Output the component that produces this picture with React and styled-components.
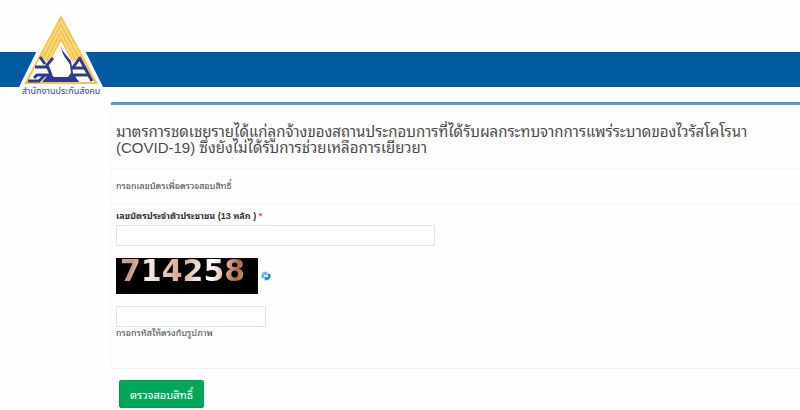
import React, { useState } from "react";
import styled, { createGlobalStyle } from "styled-components";

const GlobalStyle = createGlobalStyle`
  * {
    box-sizing: border-box;
  }
  body {
    margin: 0;
    background: #fefefe;
    color: #4a4a4a;
    font-family: "Liberation Sans", "Noto Sans Thai Looped", sans-serif;
    font-size: 9px;
    line-height: 12px;
  }
`;

const Header = styled.header`
  position: relative;
  padding-top: 52px;
`;

const Bar = styled.div`
  height: 35px;
  background: #005a9f;
`;

const Brand = styled.a`
  position: absolute;
  top: 0;
  left: 18px;
  display: flex;
  flex-direction: column;
  align-items: center;
  width: 86px;
  color: #34408f;
  font-family: "Noto Sans Thai", sans-serif;
  line-height: 8px;
  text-decoration: none;
  white-space: nowrap;
`;

const Content = styled.main`
  padding: 15px 0 2px 110px;
`;

const Panel = styled.section`
  border-top: 3px solid #5b9bc6;
  border-left: 1px solid #f9f9f9;
  border-bottom: 1px solid #f3f3f3;
  border-radius: 3px 0 0 3px;
`;

const PanelHeader = styled.div`
  padding: 19px 5px 12px;
  border-bottom: 1px solid #f7f7f7;
`;

const Title = styled.h1`
  margin: 0;
  font-size: 15px;
  font-weight: 400;
  line-height: 16px;
`;

const Intro = styled.p`
  margin: 0;
  padding: 11px 5px;
  border-bottom: 1px solid #f7f7f7;
`;

const Fields = styled.div`
  display: flex;
  flex-direction: column;
  align-items: flex-start;
  gap: 12px;
  padding: 6px 5px 29px;
`;

const Field = styled.div`
  width: 100%;
`;

const Label = styled.label`
  display: block;
  margin-bottom: 3px;
  color: #333333;
  font-weight: 700;
`;

const Required = styled.span`
  color: #e8453c;
`;

const TextInput = styled.input`
  display: block;
  width: 100%;
  max-width: ${(props) => (props.$short ? "150px" : "319px")};
  height: 21px;
  padding: 2px 6px;
  border: 1px solid #dfe6e8;
  background: #ffffff;
  color: #444444;
  font: inherit;
`;

const Hint = styled.label`
  display: block;
`;

const CaptchaRow = styled.div`
  display: flex;
  align-items: center;
  gap: 3px;
`;

const Captcha = styled.div`
  width: 142px;
  height: 36px;
  padding-left: 4px;
  background: #000000;
  font-family: "DejaVu Sans", sans-serif;
  font-size: 30px;
  font-weight: 700;
  line-height: 26px;
`;

const CaptchaCode = styled.span`
  background: linear-gradient(
    100deg,
    #d9a58c 0%,
    #c99880 10%,
    #f3e9e4 24%,
    #e2c6b8 38%,
    #d8a287 50%,
    #eadcd5 60%,
    #ffffff 72%,
    #e0b9a5 82%,
    #a8684c 92%,
    #d7a78f 100%
  );
  background-clip: text;
  color: transparent;
`;

const RefreshButton = styled.button`
  display: flex;
  padding: 0;
  border: 0;
  background: none;
  cursor: pointer;
`;

const Actions = styled.div`
  padding: 11px 9px 0;
`;

const SubmitButton = styled.button`
  height: 28px;
  padding: 0 10px;
  border: 1px solid #009a50;
  border-radius: 2px;
  background: #00a65a;
  color: #ffffff;
  font-family: inherit;
  font-size: 11px;
  cursor: pointer;
`;

function Logo() {
  return (
    <svg width="86" height="87" viewBox="18 0 86 87" aria-hidden="true">
      <path d="M61 2L103 87H19Z" fill="#ffffff" />
      <path d="M61 15L98 84H24Z" fill="#f4c64f" />
      <g fill="none" stroke="#fdf0c4" strokeWidth="0.8">
        <path d="M28 82L61 21L94 82" />
        <path d="M33 82L61 28L89 82" />
        <path d="M38 82L61 35L84 82" />
      </g>
      <path
        d="M61 41L70 58L73 62L80 57L94 82H28L40 58L49 62L52 58Z"
        fill="#ffffff"
      />
      <path
        d="M61 45L62 50L71 61L73 73L79 82H42L47 76L50 73L54 77H68L71 73L70 65C68 60 61 55 61 45Z"
        fill="#2f3991"
      />
      <g fill="none" stroke="#2f3991" strokeWidth="3">
        <path d="M40 57L45 64" />
        <path d="M53 58L47 65L51 75" />
        <path d="M35 67H48" />
        <path d="M49 75H37L34 78" />
        <path d="M28 81H39L45 75" />
        <path d="M79 57L92 81" />
        <path d="M79 59L72 69" />
        <path d="M72 68H86" />
        <path d="M74 75H89" />
      </g>
    </svg>
  );
}

function RefreshIcon() {
  return (
    <svg width="10" height="10" viewBox="0 0 11 11" aria-hidden="true">
      <path
        d="M1 8C-1 4 2 0 6 1L7 0L7 5L3 4L4 3C3 4 3 6 4 8Z"
        fill="#6cb6ea"
      />
      <path
        d="M10 3C12 7 9 11 5 10L4 11L4 6L8 7L7 8C8 7 8 5 7 3Z"
        fill="#2f86d2"
      />
    </svg>
  );
}

function App() {
  const [citizenId, setCitizenId] = useState("");
  const [code, setCode] = useState("");

  return (
    <>
      <GlobalStyle />
      <Header>
        <Bar />
        <Brand href="#">
          <Logo />
          <span>สำนักงานประกันสังคม</span>
        </Brand>
      </Header>
      <Content>
        <form onSubmit={(e) => e.preventDefault()}>
          <Panel>
            <PanelHeader>
              <Title>
                มาตรการชดเชยรายได้แก่ลูกจ้างของสถานประกอบการที่ได้รับผลกระทบจากการแพร่ระบาดของไวรัสโคโรนา
                <br />
                (COVID-19) ซึ่งยังไม่ได้รับการช่วยเหลือการเยียวยา
              </Title>
            </PanelHeader>
            <Intro>กรอกเลขบัตรเพื่อตรวจสอบสิทธิ์</Intro>
            <Fields>
              <Field>
                <Label htmlFor="citizen-id">
                  เลขบัตรประจำตัวประชาชน (13 หลัก ) <Required>*</Required>
                </Label>
                <TextInput
                  id="citizen-id"
                  value={citizenId}
                  maxLength={13}
                  onChange={(e) => setCitizenId(e.target.value)}
                />
              </Field>
              <CaptchaRow>
                <Captcha>
                  <CaptchaCode>714258</CaptchaCode>
                </Captcha>
                <RefreshButton type="button">
                  <RefreshIcon />
                </RefreshButton>
              </CaptchaRow>
              <Field>
                <TextInput
                  $short
                  id="captcha-code"
                  value={code}
                  onChange={(e) => setCode(e.target.value)}
                />
                <Hint htmlFor="captcha-code">กรอกรหัสให้ตรงกับรูปภาพ</Hint>
              </Field>
            </Fields>
          </Panel>
          <Actions>
            <SubmitButton type="submit">ตรวจสอบสิทธิ์</SubmitButton>
          </Actions>
        </form>
      </Content>
    </>
  );
}

export default App;
